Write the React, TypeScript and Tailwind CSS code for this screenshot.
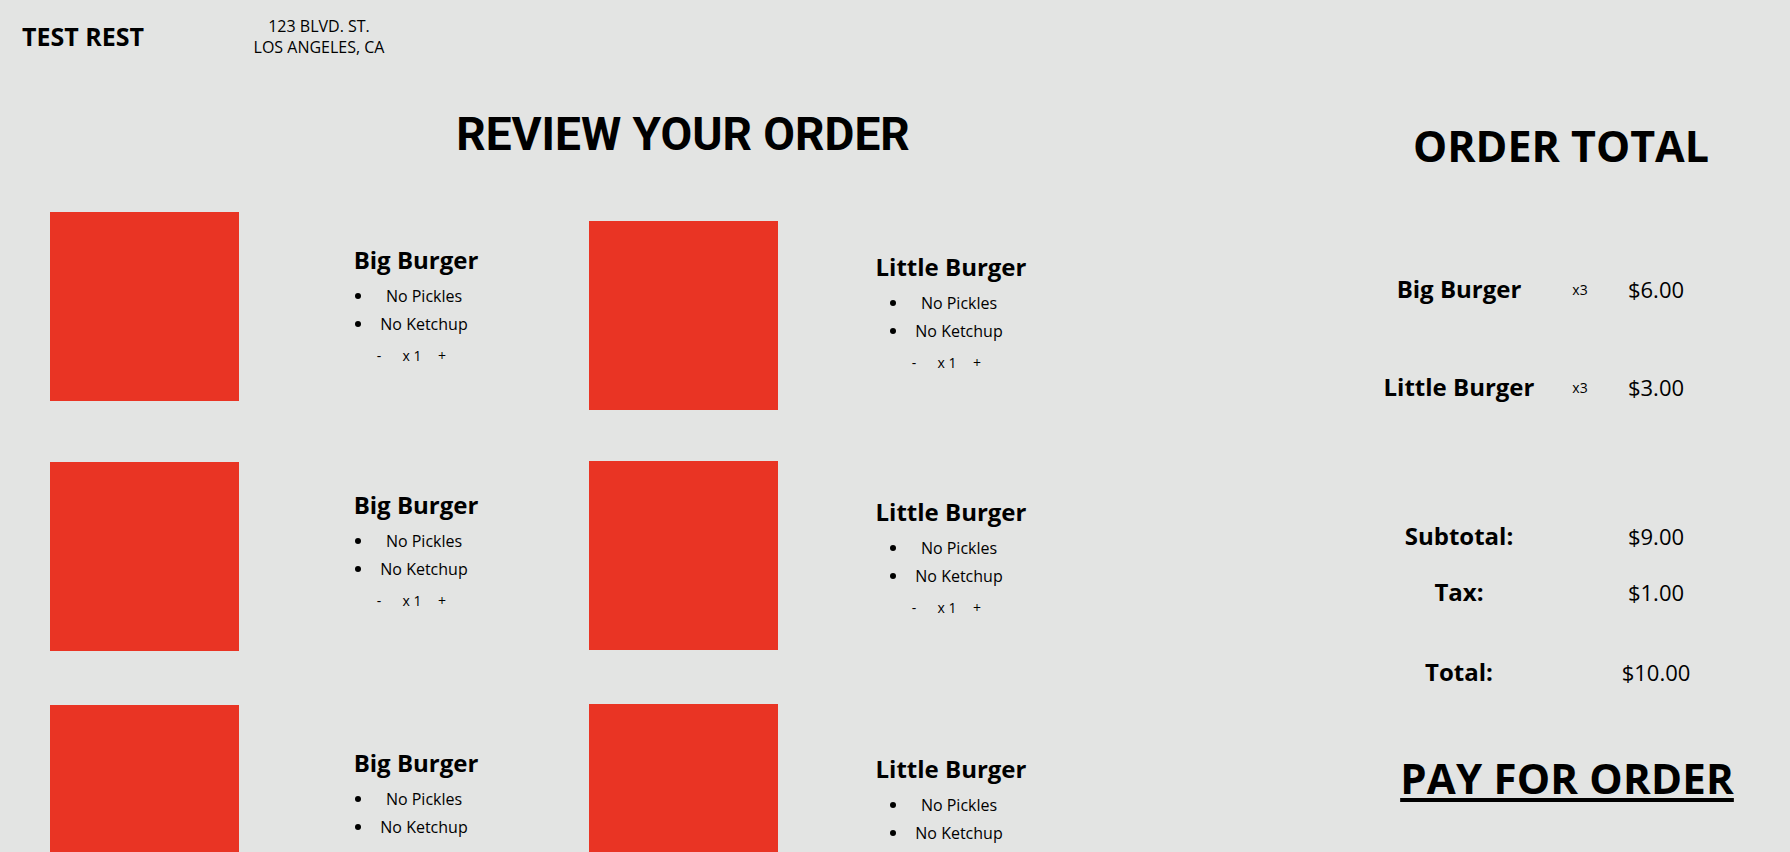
import React from "react";

type CardProps = {
	name: string;
	top: string;
	gap: string;
	textTop: string;
};

const Bullet = ({ label }: { label: string }) => (
	<li className="flex items-center pl-[36px]">
		<span className="w-[12px] flex justify-center">
			<span className="w-[6px] h-[6px] rounded-full bg-black" />
		</span>
		<span className="w-[120px] text-center">{label}</span>
	</li>
);

const Card = ({ name, top, gap, textTop }: CardProps) => {
	return (
		<div className={`flex items-start ${top}`}>
			<div className="w-[189px] h-[189px] bg-[#e93424] shrink-0" />
			<div className={`w-[200px] ${gap} ${textTop}`}>
				<h3 className="text-center text-[24px] leading-[34px] font-bold">{name}</h3>
				<ul className="mt-[5px] text-[16px] leading-[28px]">
					<Bullet label="No Pickles" />
					<Bullet label="No Ketchup" />
				</ul>
				<div className="mt-[6px] flex pl-[56px] text-[14px] leading-[24px]">
					<span className="w-[14px] text-center">-</span>
					<span className="w-[52px] text-center">x 1</span>
					<span className="w-[6px] text-center">+</span>
				</div>
			</div>
		</div>
	);
};

const SummaryRow = ({ label, qty, price, top }: { label: string; qty?: string; price: string; top: string }) => {
	return (
		<div className={`flex items-center h-[40px] ${top}`}>
			<div className="w-[186px] text-center text-[24px] font-bold">{label}</div>
			<div className="w-[56px] text-center text-[14px]">{qty}</div>
			<div className="w-[96px] text-center text-[22px]">{price}</div>
		</div>
	);
};

export default function App() {
	return (
		<div className="min-h-screen bg-[#e3e4e3] text-black font-['Open_Sans',sans-serif]">
			{/* header */}
			<header className="flex items-center h-[74px] pl-[22px]">
				<div className="w-[197px] text-[25px] font-bold">TEST REST</div>
				<div className="w-[200px] text-center text-[16px] leading-[21px]">
					<p>123 BLVD. ST.</p>
					<p>LOS ANGELES, CA</p>
				</div>
			</header>

			<main className="flex">
				{/* review column */}
				<section className="w-[1366px] shrink-0">
					<h1 className="mt-[30px] h-[60px] leading-[60px] text-center text-[46px] font-bold font-['Roboto',sans-serif]">
						REVIEW YOUR ORDER
					</h1>
					<div className="flex pl-[50px]">
						<div className="w-[539px] flex flex-col">
							<Card name="Big Burger" top="mt-[48px]" gap="ml-[77px]" textTop="mt-[31px]" />
							<Card name="Big Burger" top="mt-[61px]" gap="ml-[77px]" textTop="mt-[26px]" />
							<Card name="Big Burger" top="mt-[54px]" gap="ml-[77px]" textTop="mt-[41px]" />
						</div>
						<div className="flex flex-col">
							<Card name="Little Burger" top="mt-[57px]" gap="ml-[73px]" textTop="mt-[29px]" />
							<Card name="Little Burger" top="mt-[51px]" gap="ml-[73px]" textTop="mt-[34px]" />
							<Card name="Little Burger" top="mt-[54px]" gap="ml-[73px]" textTop="mt-[48px]" />
						</div>
					</div>
				</section>

				{/* totals column */}
				<aside className="w-[390px] shrink-0">
					<h2 className="mt-[42px] h-[60px] leading-[60px] text-center text-[43px] font-bold">ORDER TOTAL</h2>
					<SummaryRow label="Big Burger" qty="x3" price="$6.00" top="mt-[93px]" />
					<SummaryRow label="Little Burger" qty="x3" price="$3.00" top="mt-[58px]" />
					<SummaryRow label="Subtotal:" price="$9.00" top="mt-[109px]" />
					<SummaryRow label="Tax:" price="$1.00" top="mt-[16px]" />
					<SummaryRow label="Total:" price="$10.00" top="mt-[40px]" />
					<div className="mt-[58px] pl-[12px] text-center">
						<button className="text-[42px] leading-[56px] font-bold tracking-[0.2px] underline decoration-[4px] underline-offset-[4px]">
							PAY FOR ORDER
						</button>
					</div>
				</aside>
			</main>
		</div>
	);
}
